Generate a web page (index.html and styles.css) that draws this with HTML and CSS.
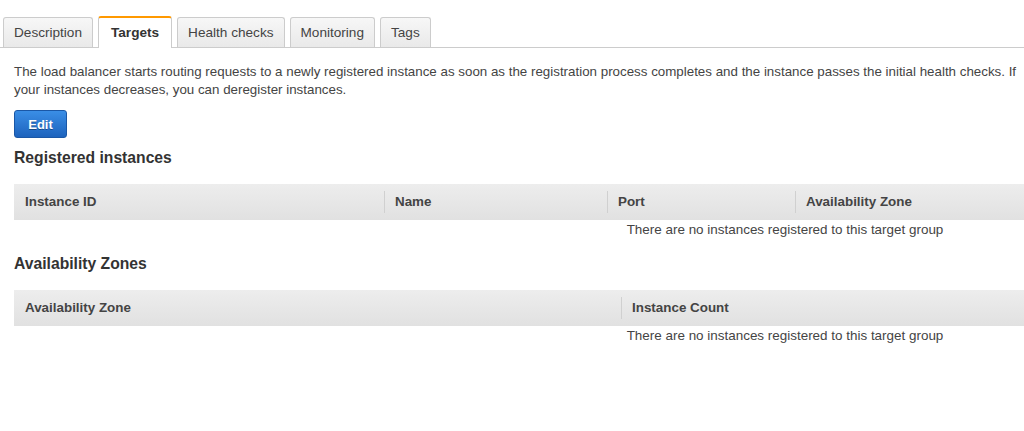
FILE: index.html
```html
<!DOCTYPE html>
<html lang="en">
  <head>
    <meta charset="UTF-8" />
    <meta name="viewport" content="width=device-width, initial-scale=1.0" />
    <title>Target group - Targets</title>
    <link rel="stylesheet" href="styles.css">
  </head>
  <body>
    <div class="tabs">
      <div class="tab">Description</div>
      <div class="tab active">Targets</div>
      <div class="tab">Health checks</div>
      <div class="tab">Monitoring</div>
      <div class="tab">Tags</div>
    </div>
    <div class="content">
      <p class="intro">The load balancer starts routing requests to a newly registered instance as soon as the registration process completes and the instance passes the initial health checks. If your instances decreases, you can deregister instances.</p>
      <button class="btn-primary" type="button">Edit</button>

      <h2>Registered instances</h2>
      <div class="grid grid-instances">
        <div class="grid-head">
          <div class="col">Instance ID</div>
          <div class="col">Name</div>
          <div class="col">Port</div>
          <div class="col">Availability Zone</div>
        </div>
        <div class="empty">There are no instances registered to this target group</div>
      </div>

      <h2>Availability Zones</h2>
      <div class="grid grid-zones">
        <div class="grid-head">
          <div class="col">Availability Zone</div>
          <div class="col">Instance Count</div>
        </div>
        <div class="empty">There are no instances registered to this target group</div>
      </div>
    </div>
  </body>
</html>
```

FILE: styles.css
```css
body {
  font-family: Arial, "Liberation Sans", sans-serif;
  background-color: #fff;
  color: #444;
  margin: 0;
  padding: 0;
  overflow: hidden;
}
.tabs {
  display: flex;
  gap: 5px;
  margin-top: 16px;
  padding-left: 3px;
  border-bottom: 1px solid #ccc;
  height: 31px;
}
.tab {
  height: 30px;
  line-height: 30px;
  padding: 0 10px;
  font-size: 13.6px;
  color: #444;
  background: linear-gradient(#f7f7f7, #e9e9e9);
  border: 1px solid #ccc;
  border-bottom: none;
  border-radius: 3px 3px 0 0;
  margin-top: 1px;
  box-sizing: border-box;
}
.tab.active {
  background: #fff;
  font-weight: bold;
  color: #333;
  border-top: 2px solid #f90;
  margin-top: 0;
  height: 32px;
  line-height: 29px;
  padding: 0 12px;
}
.content {
  width: 1542px;
  padding: 0 14px;
}
.intro {
  max-width: 1012px;
  font-size: 13.35px;
  line-height: 18px;
  margin: 15px 0 11px;
  color: #444;
}
.btn-primary {
  display: block;
  height: 28px;
  width: 53px;
  padding: 0;
  font-family: Arial, "Liberation Sans", sans-serif;
  font-size: 13px;
  font-weight: bold;
  color: #fff;
  text-shadow: 0 1px 0 rgba(0, 0, 0, 0.35);
  background: linear-gradient(#3a8ee6, #1d63bd);
  border: 1px solid #1a57a6;
  border-radius: 3px;
  cursor: pointer;
}
h2 {
  font-size: 15.7px;
  line-height: 18px;
  font-weight: bold;
  color: #333;
  margin: 11px 0 17px;
}
.grid {
  width: 1542px;
}
.grid-head {
  display: grid;
  height: 36px;
  align-items: center;
  background: linear-gradient(#ededed, #e1e1e1);
  font-size: 13.4px;
  font-weight: bold;
  color: #444;
}
.grid-instances .grid-head {
  grid-template-columns: 370px 223px 188px 1fr;
}
.grid-zones .grid-head {
  grid-template-columns: 607px 1fr;
}
.col {
  padding-left: 10px;
  line-height: 22px;
  border-left: 1px solid #d0d0d0;
}
.col:first-child {
  border-left: 1px solid transparent;
}
.empty {
  text-align: center;
  font-size: 13.45px;
  line-height: 18px;
  padding-top: 1px;
  color: #444;
}
.grid + h2 {
  margin-top: 16px;
}
```
